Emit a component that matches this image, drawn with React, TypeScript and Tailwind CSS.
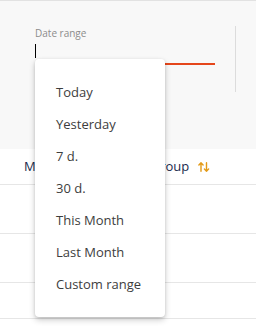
const ranges = ["Today", "Yesterday", "7 d.", "30 d.", "This Month", "Last Month", "Custom range"];

function SortIcon() {
  return (
    <svg width="12" height="10" viewBox="0 0 12 10" fill="none" stroke="#e39a17" strokeWidth="1.4" strokeLinecap="round" strokeLinejoin="round">
      <path d="M3 9.3V0.8M0.9 2.9L3 0.8L5.1 2.9" />
      <path d="M8.5 0.7V9.2M6.4 7.1L8.5 9.2L10.6 7.1" />
    </svg>
  );
}

export default function App() {
  return (
    <div className="relative w-[256px] h-[331px] overflow-hidden bg-white font-['Open_Sans',sans-serif]">
      {/* filter panel */}
      <div className="h-[149px] bg-[#f8f8f8] border-t border-[#e2e2e2] flex items-start">
        <div className="ml-[35px] w-[180px] pt-[25px]">
          <div className="text-[10px] leading-[14px] text-[#8c8c8c]">Date range</div>
          <div className="h-[25px] border-b-2 border-[#e5461b] pt-[4px]">
            <div className="w-px h-[14px] bg-black" />
          </div>
        </div>
        <div className="ml-[20px] mt-[25px] w-px h-[66px] bg-[#dcdcdc]" />
      </div>

      {/* table */}
      <div className="h-[36px] px-6 flex items-center border-b border-[#e6e6e6] text-[13px] text-[#1b2a4e]">
        <span className="w-[78px]">Merchant</span>
        <span>Product group</span>
        <span className="ml-[9px] flex">
          <SortIcon />
        </span>
      </div>
      <div className="h-[49px] border-b border-[#e6e6e6]" />
      <div className="h-[49px] border-b border-[#e6e6e6]" />
      <div className="h-[36px] border-b border-[#e6e6e6]" />

      {/* dropdown menu */}
      <div className="absolute left-[35px] top-[59px] w-[130px] h-[258px] pt-[18px] pb-[16px] bg-white rounded-[4px] shadow-[0_3px_6px_rgba(0,0,0,0.2),0_1px_3px_rgba(0,0,0,0.12)]">
        {ranges.map((r) => (
          <div key={r} className="h-[32px] pl-[21px] flex items-center text-[13px] text-[#3d3d3d]">
            {r}
          </div>
        ))}
      </div>
    </div>
  );
}
